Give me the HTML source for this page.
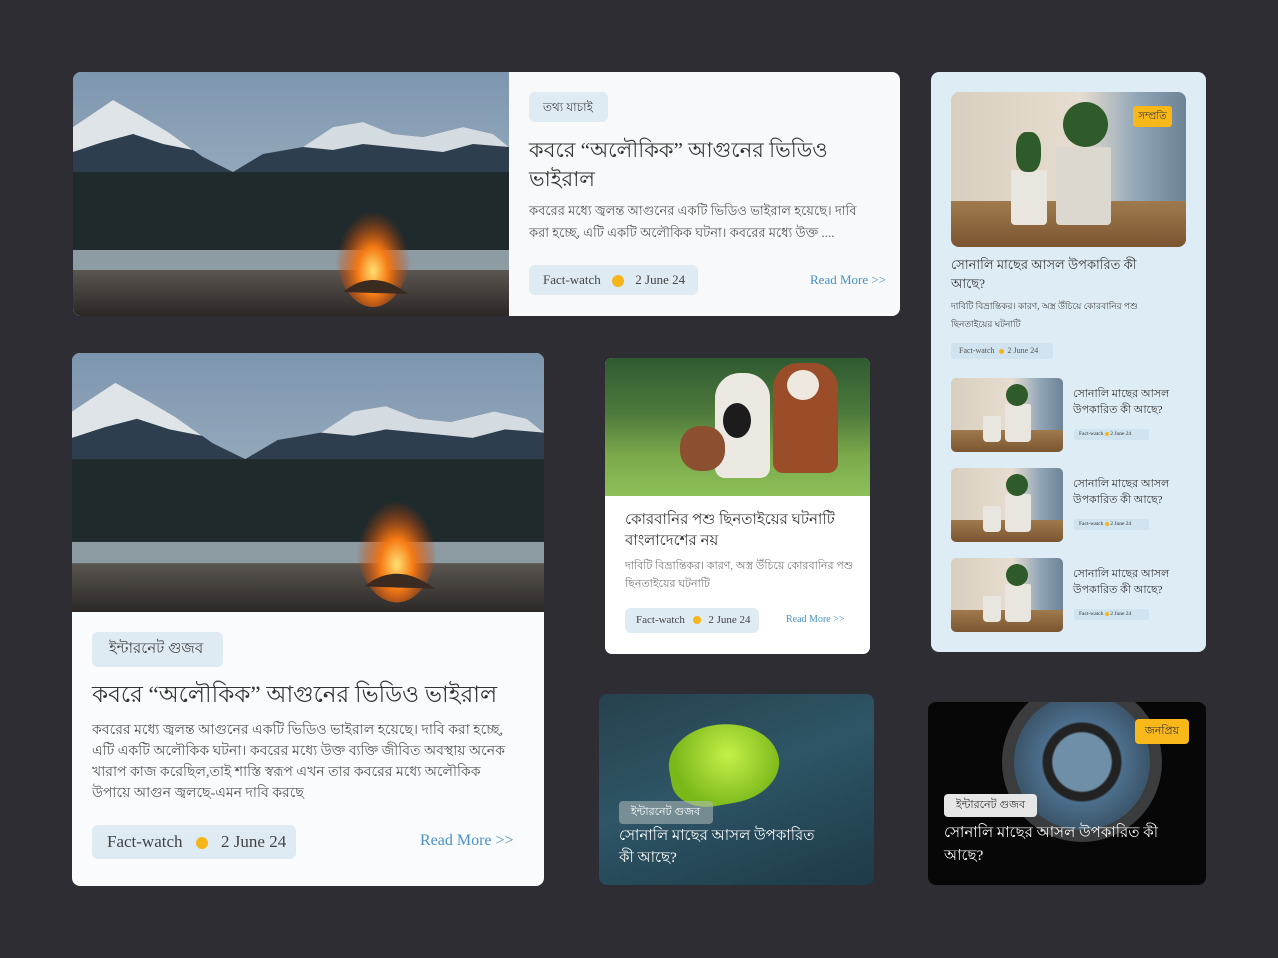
<!DOCTYPE html>
<html><head><meta charset="utf-8"><style>
*{margin:0;padding:0;box-sizing:border-box}
body{width:1278px;height:958px;background:#2e2d34;position:relative;overflow:hidden;font-family:"Liberation Serif","Noto Sans CJK SC",serif;color:#333}
.abs{position:absolute}
.tag{background:#deebf3;border-radius:6px;color:#444}
.dot{display:inline-block;border-radius:50%;background:#f7b51c;vertical-align:middle}
.rm{color:#4a90c4}
.plant{background:linear-gradient(90deg,#d8cfc0 0%,#e6ddd0 55%,#8fa4b6 80%,#6d8396 100%);overflow:hidden}
.plant:after{content:"";position:absolute;left:0;right:0;bottom:0;height:30%;background:linear-gradient(180deg,#a07a4e,#7a5530)}
.pot{position:absolute;background:#e9e6e0;border-radius:2px 2px 4px 4px;z-index:1}
.leaf{position:absolute;background:#2f5a2a;border-radius:50%;z-index:1}
.mtn{overflow:hidden}
.mtn svg{position:absolute;left:0;top:0;width:100%;height:100%}
</style></head><body>

<svg width="0" height="0" style="position:absolute">
<defs>
<linearGradient id="sky" x1="0" y1="0" x2="0" y2="1"><stop offset="0" stop-color="#7d96af"/><stop offset="1" stop-color="#b3c1cc"/></linearGradient>
<linearGradient id="gr" x1="0" y1="0" x2="0" y2="1"><stop offset="0" stop-color="#5b5650"/><stop offset="1" stop-color="#2c2826"/></linearGradient>
<radialGradient id="fl" cx="0.5" cy="0.7" r="0.5"><stop offset="0" stop-color="#ffe070"/><stop offset="0.4" stop-color="#f57a14"/><stop offset="1" stop-color="#c83a00" stop-opacity="0"/></radialGradient>
<symbol id="scene" viewBox="0 0 436 244" preserveAspectRatio="none">
<rect width="436" height="244" fill="url(#sky)"/>
<polygon points="0,55 40,28 70,45 95,60 130,85 160,100 190,82 230,75 260,55 290,50 320,62 350,65 390,55 420,62 436,75 436,130 0,130" fill="#2e3e4e"/>
<polygon points="0,55 40,28 70,45 95,60 120,78 90,72 60,62 30,70 0,80" fill="#dfe4e8"/>
<polygon points="230,75 260,55 290,50 320,62 350,65 390,55 420,62 436,75 400,72 370,80 330,76 290,72 260,78" fill="#d4dbe1"/>
<rect x="0" y="100" width="436" height="80" fill="#1e2a2c"/>
<rect x="0" y="178" width="436" height="22" fill="#8d9ba2"/>
<rect x="0" y="198" width="436" height="46" fill="url(#gr)"/>
<ellipse cx="300" cy="175" rx="38" ry="60" fill="url(#fl)"/>
<path d="M270,220 Q300,195 335,222 Z" fill="#3a2a20"/>
</symbol>
</defs></svg>

<!-- card 1 -->
<div class="abs" style="left:73px;top:72px;width:827px;height:244px;border-radius:8px;overflow:hidden;background:#f8f9fa">
  <div class="abs mtn" style="left:0;top:0;width:436px;height:244px"><svg><use href="#scene"/></svg></div>
  <div class="abs tag" style="left:456px;top:20px;width:79px;height:30px;font-size:12px;line-height:30px;padding-left:14px">তথ্য যাচাই</div>
  <div class="abs" style="left:456px;top:64px;width:330px;font-size:21px;line-height:29px;color:#333">কবরে “অলৌকিক” আগুনের ভিডিও ভাইরাল</div>
  <div class="abs" style="left:456px;top:128px;width:350px;font-size:13px;line-height:22px;color:#555">কবরের মধ্যে জ্বলন্ত আগুনের একটি ভিডিও ভাইরাল হয়েছে। দাবি করা হচ্ছে, এটি একটি অলৌকিক ঘটনা। কবরের মধ্যে উক্ত ....</div>
  <div class="abs tag" style="left:456px;top:193px;width:169px;height:30px;font-size:13px;line-height:30px;padding-left:14px">Fact-watch <span class="dot" style="width:12px;height:12px;margin:0 8px"></span> 2 June 24</div>
  <div class="abs rm" style="left:737px;top:200px;font-size:13px">Read More &gt;&gt;</div>
</div>

<!-- card 2 -->
<div class="abs" style="left:72px;top:353px;width:472px;height:533px;border-radius:8px;overflow:hidden;background:#fafbfc">
  <div class="abs mtn" style="left:0;top:0;width:472px;height:259px"><svg><use href="#scene"/></svg></div>
  <div class="abs tag" style="left:20px;top:279px;width:131px;height:35px;font-size:15px;line-height:35px;padding-left:17px">ইন্টারনেট গুজব</div>
  <div class="abs" style="left:20px;top:326px;font-size:23px;line-height:32px;white-space:nowrap">কবরে “অলৌকিক” আগুনের ভিডিও ভাইরাল</div>
  <div class="abs" style="left:20px;top:367px;width:430px;font-size:14px;line-height:21px;color:#555">কবরের মধ্যে জ্বলন্ত আগুনের একটি ভিডিও ভাইরাল হয়েছে। দাবি করা হচ্ছে, এটি একটি অলৌকিক ঘটনা। কবরের মধ্যে উক্ত ব্যক্তি জীবিত অবস্থায় অনেক খারাপ কাজ করেছিল,তাই শাস্তি স্বরূপ এখন তার কবরের মধ্যে অলৌকিক উপায়ে আগুন জ্বলছে-এমন দাবি করছে</div>
  <div class="abs tag" style="left:20px;top:472px;width:204px;height:34px;font-size:17px;line-height:34px;padding-left:15px">Fact-watch <span class="dot" style="width:12px;height:12px;margin:0 9px"></span> 2 June 24</div>
  <div class="abs rm" style="left:348px;top:479px;font-size:16px">Read More &gt;&gt;</div>
</div>

<!-- cow card -->
<div class="abs" style="left:605px;top:358px;width:265px;height:296px;border-radius:7px;overflow:hidden;background:#fff">
  <div class="abs" style="left:0;top:0;width:265px;height:138px;background:linear-gradient(180deg,#2f5a32 0%,#4d7a3c 40%,#7aa84a 70%,#8cc05a 100%)">
    <div class="abs" style="left:110px;top:15px;width:55px;height:105px;background:#ece8e2;border-radius:25px 25px 10px 10px"></div>
    <div class="abs" style="left:118px;top:45px;width:28px;height:35px;background:#1c1c1c;border-radius:50%"></div>
    <div class="abs" style="left:168px;top:5px;width:65px;height:110px;background:#9a4d28;border-radius:25px 25px 10px 10px"></div>
    <div class="abs" style="left:182px;top:12px;width:32px;height:30px;background:#efe8de;border-radius:50%"></div>
    <div class="abs" style="left:75px;top:68px;width:45px;height:45px;background:#8c5030;border-radius:20px"></div>
  </div>
  <div class="abs" style="left:20px;top:152px;width:230px;font-size:15px;line-height:21px">কোরবানির পশু ছিনতাইয়ের ঘটনাটি বাংলাদেশের নয়</div>
  <div class="abs" style="left:20px;top:199px;width:230px;font-size:11px;line-height:18px;color:#777">দাবিটি বিভ্রান্তিকর। কারণ, অস্ত্র উঁচিয়ে কোরবানির পশু ছিনতাইয়ের ঘটনাটি</div>
  <div class="abs tag" style="left:20px;top:250px;width:134px;height:25px;font-size:11px;line-height:25px;padding-left:11px">Fact-watch <span class="dot" style="width:8px;height:8px;margin:0 5px"></span> 2 June 24</div>
  <div class="abs rm" style="left:181px;top:256px;font-size:10px">Read More &gt;&gt;</div>
</div>

<!-- right panel -->
<div class="abs" style="left:931px;top:72px;width:275px;height:580px;border-radius:8px;background:#deedf5">
  <div class="abs plant" style="left:20px;top:20px;width:235px;height:155px;border-radius:8px">
    <div class="pot" style="left:60px;top:78px;width:36px;height:55px"></div>
    <div class="pot" style="left:105px;top:55px;width:55px;height:78px;background:#ddd8cf"></div>
    <div class="leaf" style="left:112px;top:10px;width:45px;height:45px"></div>
    <div class="leaf" style="left:65px;top:40px;width:25px;height:40px;border-radius:40%"></div>
    <div class="abs" style="left:182px;top:14px;width:39px;height:21px;background:#f9b81a;border-radius:3px;font-size:10px;line-height:21px;text-align:center;z-index:2">সম্প্রতি</div>
  </div>
  <div class="abs" style="left:20px;top:183px;width:210px;font-size:13px;line-height:19px">সোনালি মাছের আসল উপকারিত কী আছে?</div>
  <div class="abs" style="left:20px;top:225px;width:215px;font-size:9px;line-height:18px;color:#444">দাবিটি বিভ্রান্তিকর। কারণ, অস্ত্র উঁচিয়ে কোরবানির পশু ছিনতাইয়ের ঘটনাটি</div>
  <div class="abs" style="left:20px;top:271px;width:102px;height:16px;background:#d0e3ee;border-radius:3px;font-size:8px;line-height:16px;padding-left:8px;color:#555">Fact-watch <span class="dot" style="width:5px;height:5px;margin:0 2px"></span> 2 June 24</div>

  <div class="abs plant" style="left:20px;top:306px;width:112px;height:74px;border-radius:5px"><div class="pot" style="left:32px;top:38px;width:18px;height:26px"></div><div class="pot" style="left:54px;top:26px;width:26px;height:38px"></div><div class="leaf" style="left:55px;top:6px;width:22px;height:22px"></div></div>
  <div class="abs" style="left:142px;top:314px;width:110px;font-size:11px;line-height:16px">সোনালি মাছের আসল উপকারিত কী আছে?</div>
  <div class="abs" style="left:143px;top:357px;width:75px;height:11px;background:#d0e3ee;border-radius:2px;font-size:5.5px;line-height:11px;padding-left:5px">Fact-watch <span class="dot" style="width:4px;height:4px"></span> 2 June 24</div>

  <div class="abs plant" style="left:20px;top:396px;width:112px;height:74px;border-radius:5px"><div class="pot" style="left:32px;top:38px;width:18px;height:26px"></div><div class="pot" style="left:54px;top:26px;width:26px;height:38px"></div><div class="leaf" style="left:55px;top:6px;width:22px;height:22px"></div></div>
  <div class="abs" style="left:142px;top:404px;width:110px;font-size:11px;line-height:16px">সোনালি মাছের আসল উপকারিত কী আছে?</div>
  <div class="abs" style="left:143px;top:447px;width:75px;height:11px;background:#d0e3ee;border-radius:2px;font-size:5.5px;line-height:11px;padding-left:5px">Fact-watch <span class="dot" style="width:4px;height:4px"></span> 2 June 24</div>

  <div class="abs plant" style="left:20px;top:486px;width:112px;height:74px;border-radius:5px"><div class="pot" style="left:32px;top:38px;width:18px;height:26px"></div><div class="pot" style="left:54px;top:26px;width:26px;height:38px"></div><div class="leaf" style="left:55px;top:6px;width:22px;height:22px"></div></div>
  <div class="abs" style="left:142px;top:494px;width:110px;font-size:11px;line-height:16px">সোনালি মাছের আসল উপকারিত কী আছে?</div>
  <div class="abs" style="left:143px;top:537px;width:75px;height:11px;background:#d0e3ee;border-radius:2px;font-size:5.5px;line-height:11px;padding-left:5px">Fact-watch <span class="dot" style="width:4px;height:4px"></span> 2 June 24</div>
</div>

<!-- fish card -->
<div class="abs" style="left:599px;top:694px;width:275px;height:191px;border-radius:8px;overflow:hidden;background:linear-gradient(160deg,#27414d 0%,#2e5566 45%,#1d3a48 100%)">
  <div class="abs" style="left:70px;top:30px;width:110px;height:80px;border-radius:50% 60% 50% 40%;background:radial-gradient(circle at 55% 40%,#c6f04a,#7ab81a 70%);transform:rotate(-10deg)"></div>
  <div class="abs" style="left:20px;top:107px;width:94px;height:23px;background:rgba(180,190,190,.55);border-radius:4px;color:#fff;font-size:11px;line-height:23px;padding-left:12px">ইন্টারনেট গুজব</div>
  <div class="abs" style="left:20px;top:131px;width:210px;color:#fff;font-size:15px;line-height:22px">সোনালি মাছের আসল উপকারিত কী আছে?</div>
</div>

<!-- space card -->
<div class="abs" style="left:928px;top:702px;width:278px;height:183px;border-radius:8px;overflow:hidden;background:#070708">
  <div class="abs" style="left:74px;top:-20px;width:160px;height:160px;border-radius:50%;border:12px solid #3a3c3e;background:radial-gradient(circle,#6f8fa8 0 30%,#222 32% 40%,#4c6f8c 42%,#2a3a48 100%)"></div>
  <div class="abs" style="left:207px;top:17px;width:54px;height:25px;background:#f9b81a;border-radius:4px;font-size:11px;line-height:25px;text-align:center">জনপ্রিয়</div>
  <div class="abs" style="left:16px;top:92px;width:93px;height:23px;background:#e6e6e6;border-radius:4px;font-size:11px;line-height:23px;padding-left:12px">ইন্টারনেট গুজব</div>
  <div class="abs" style="left:16px;top:120px;width:240px;color:#fff;font-size:15px;line-height:23px">সোনালি মাছের আসল উপকারিত কী আছে?</div>
</div>
</body></html>
